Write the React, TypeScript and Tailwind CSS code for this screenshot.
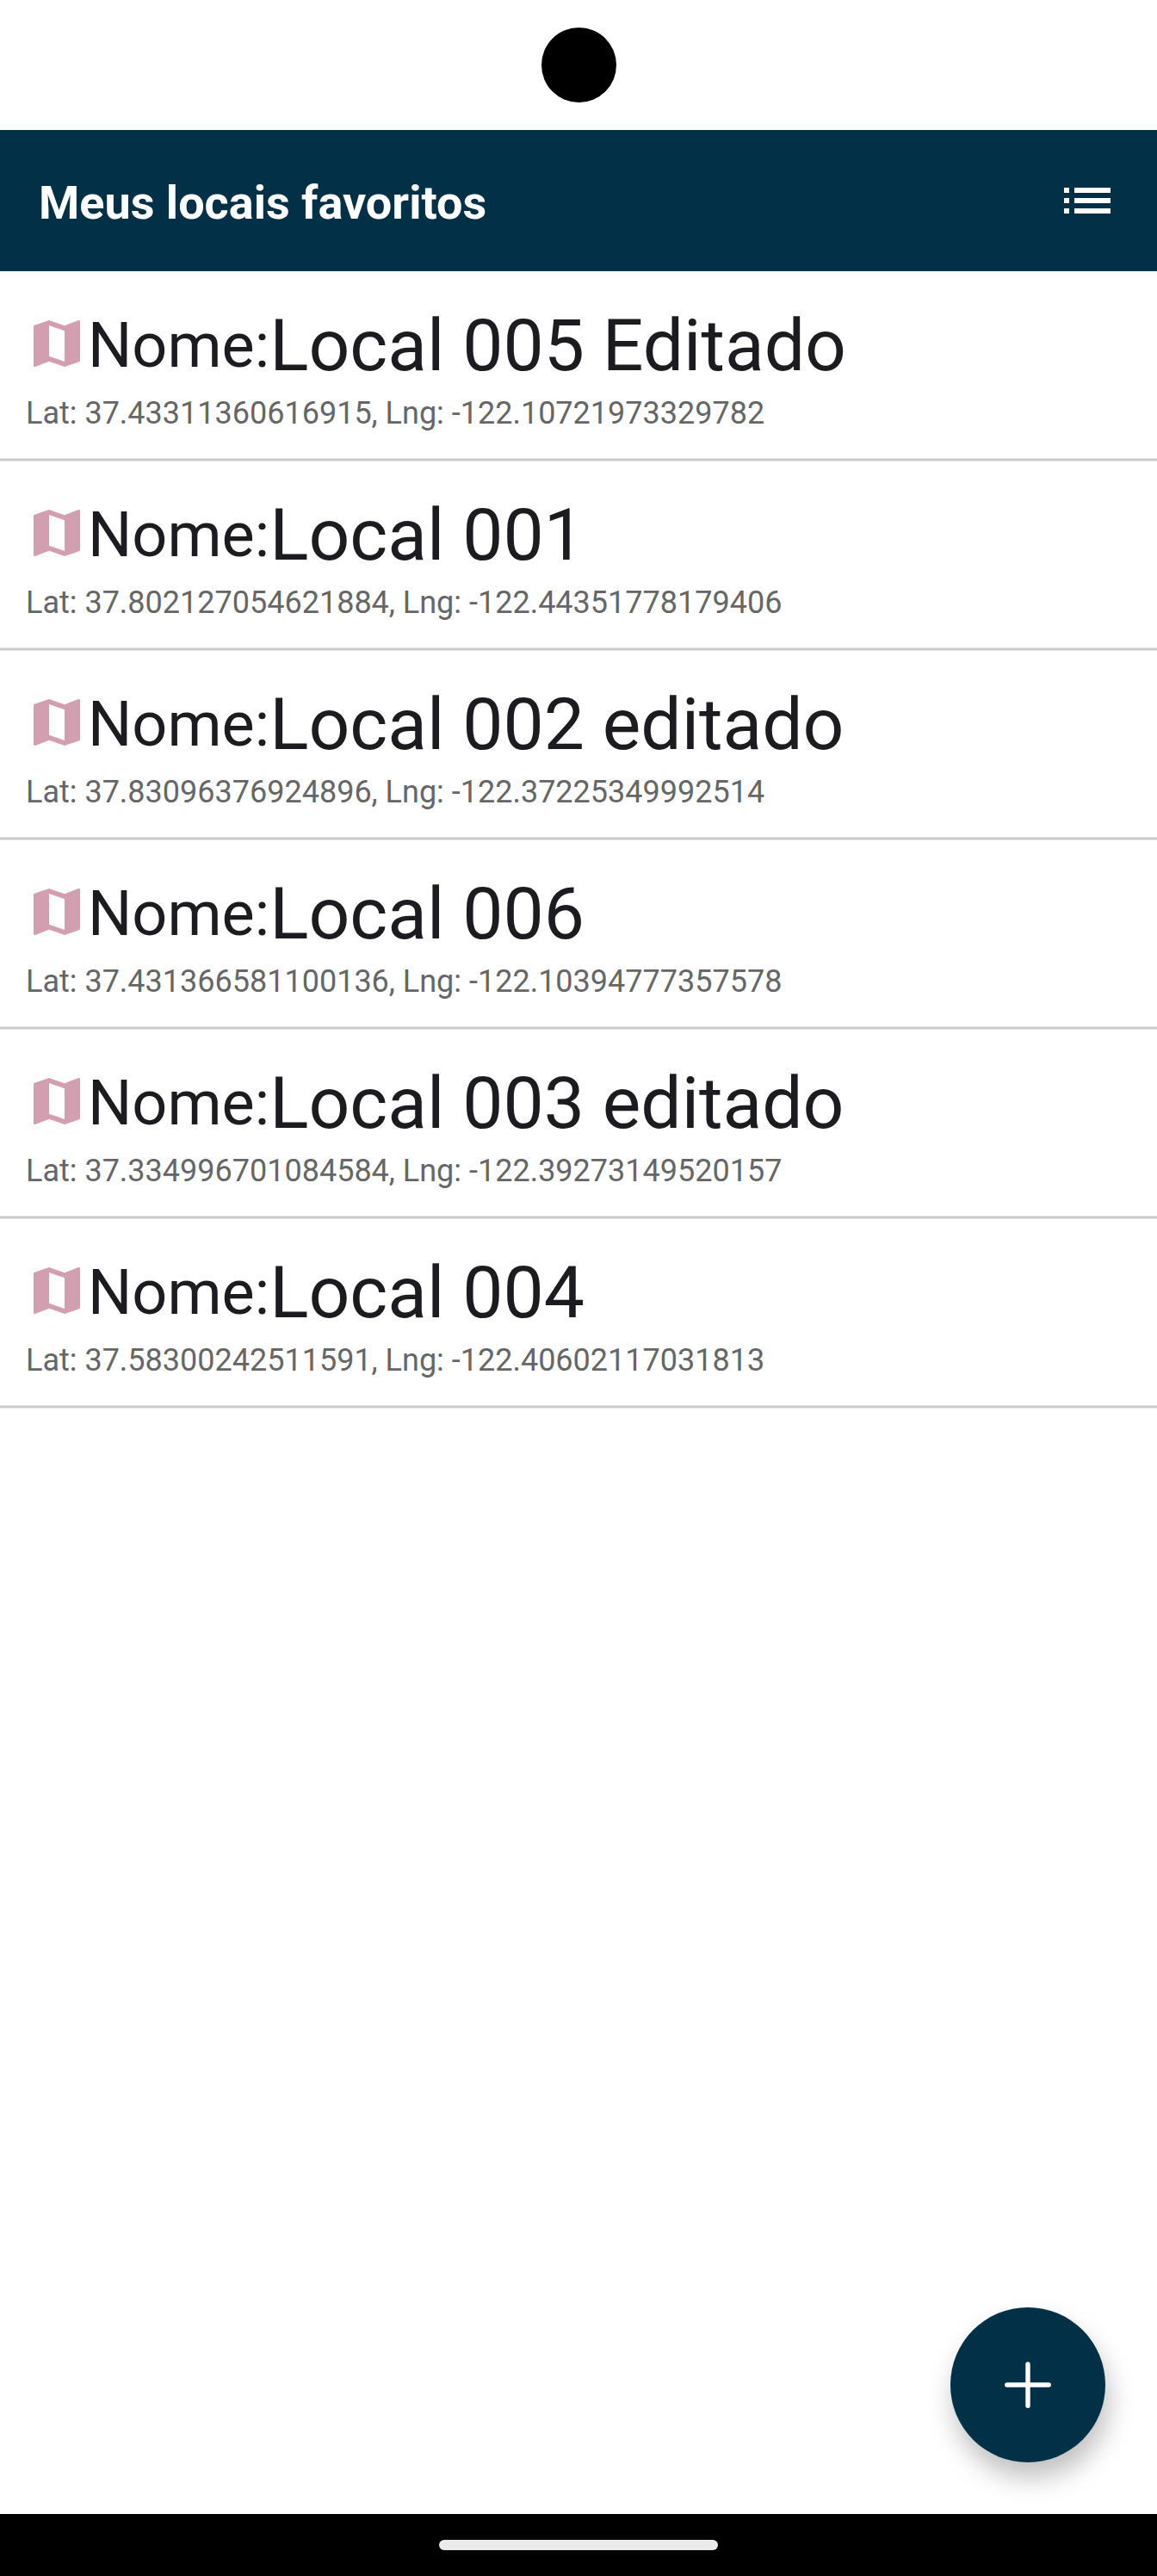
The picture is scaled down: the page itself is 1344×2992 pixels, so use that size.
const places = [
  { name: 'Local 005 Editado', coords: 'Lat: 37.43311360616915, Lng: -122.10721973329782' },
  { name: 'Local 001', coords: 'Lat: 37.802127054621884, Lng: -122.44351778179406' },
  { name: 'Local 002 editado', coords: 'Lat: 37.83096376924896, Lng: -122.37225349992514' },
  { name: 'Local 006', coords: 'Lat: 37.431366581100136, Lng: -122.10394777357578' },
  { name: 'Local 003 editado', coords: 'Lat: 37.334996701084584, Lng: -122.39273149520157' },
  { name: 'Local 004', coords: 'Lat: 37.58300242511591, Lng: -122.40602117031813' },
];

function MapIcon() {
  return (
    <svg viewBox="0 0 24 24" className="mb-1.5 size-[72px] shrink-0 fill-[#d29fb0]" aria-hidden="true">
      <path d="M20.5 3l-.16.03L15 5.1 9 3 3.36 4.9c-.21.07-.36.25-.36.48V20.5c0 .28.22.5.5.5l.16-.03L9 18.9l6 2.1 5.64-1.9c.21-.07.36-.25.36-.48V3.5c0-.28-.22-.5-.5-.5zM15 19l-6-2.11V5l6 2.11V19z" />
    </svg>
  );
}

export default function App() {
  return (
    <div className="flex min-h-screen flex-col bg-white font-[Roboto,sans-serif] text-[#1c1b1f]">
      <div className="flex h-[151px] items-center justify-center">
        <div className="size-[87px] rounded-full bg-black" />
      </div>
      <header className="flex h-[164px] items-center justify-between bg-[#023047] px-[45px] text-white">
        <h1 className="pt-1.5 text-[54px] leading-[64px] font-bold">Meus locais favoritos</h1>
        <button type="button" aria-label="Lista" className="flex">
          <svg viewBox="0 0 24 24" className="size-[72px] fill-white" aria-hidden="true">
            <path d="M3 13h2v-2H3v2zm0 4h2v-2H3v2zm0-8h2V7H3v2zm4 4h14v-2H7v2zm0 4h14v-2H7v2zM7 7v2h14V7H7z" />
          </svg>
        </button>
      </header>
      <main className="relative flex-1">
        <ul>
          {places.map((p) => (
            <li
              key={p.name}
              className="h-[220px] border-b-2 border-[#cacaca] px-[30px] pt-9 shadow-[0_1px_0_#e4e4e4,inset_0_-1px_0_#e4e4e4]"
            >
              <div className="flex h-[102px] items-center whitespace-nowrap">
                <MapIcon />
                <span className="text-[72px] leading-[104px]">Nome:</span>
                <span className="text-[84px] leading-[102px]">{p.name}</span>
              </div>
              <p className="text-[36px] leading-[54px] text-[#666]">{p.coords}</p>
            </li>
          ))}
        </ul>
        <button
          type="button"
          aria-label="Adicionar local"
          className="absolute right-[60px] bottom-[60px] flex size-[180px] items-center justify-center rounded-full bg-[#023047] shadow-[4px_18px_30px_rgba(0,0,0,0.25)]"
        >
          <svg viewBox="0 0 512 512" className="size-[86px] fill-none stroke-white" aria-hidden="true">
            <path d="M256 112v288M400 256H112" strokeWidth="32" strokeLinecap="round" />
          </svg>
        </button>
      </main>
      <footer className="flex h-[72px] items-center justify-center bg-black">
        <div className="h-[12px] w-[324px] rounded-full bg-[#ebebeb]" />
      </footer>
    </div>
  );
}
